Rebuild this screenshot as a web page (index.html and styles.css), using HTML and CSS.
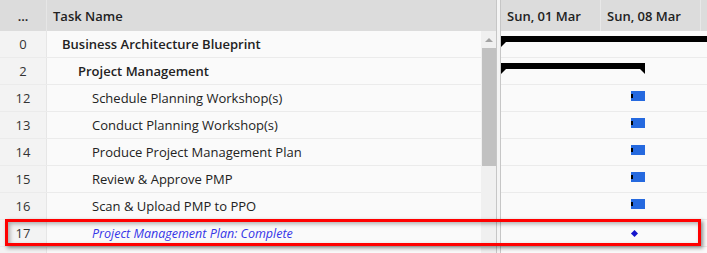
FILE: index.html
```html
<!DOCTYPE html>
<html lang="en">
<head>
    <meta charset="UTF-8">
    <link rel="stylesheet" href="styles.css">
</head>
<body>
    <div class="gantt">
        <div class="grid">
            <div class="grid-head">
                <div class="col-id">...</div>
                <div class="col-name">Task Name</div>
            </div>
            <div class="grid-body">
                <div class="grid-rows">
                    <div class="row summary"><div class="col-id">0</div><div class="col-name lvl0">Business Architecture Blueprint</div></div>
                    <div class="row summary"><div class="col-id">2</div><div class="col-name lvl1">Project Management</div></div>
                    <div class="row"><div class="col-id">12</div><div class="col-name lvl2">Schedule Planning Workshop(s)</div></div>
                    <div class="row"><div class="col-id">13</div><div class="col-name lvl2">Conduct Planning Workshop(s)</div></div>
                    <div class="row"><div class="col-id">14</div><div class="col-name lvl2">Produce Project Management Plan</div></div>
                    <div class="row"><div class="col-id">15</div><div class="col-name lvl2">Review &amp; Approve PMP</div></div>
                    <div class="row"><div class="col-id">16</div><div class="col-name lvl2">Scan &amp; Upload PMP to PPO</div></div>
                    <div class="row milestone"><div class="col-id">17</div><div class="col-name lvl2">Project Management Plan: Complete</div></div>
                    <div class="row"><div class="col-id"></div><div class="col-name"></div></div>
                </div>
                <div class="scrollbar">
                    <div class="scroll-arrow"></div>
                    <div class="scroll-thumb"></div>
                </div>
            </div>
        </div>
        <div class="splitter"></div>
        <div class="chart">
            <div class="chart-head">
                <div class="week">Sun, 01 Mar</div>
                <div class="week">Sun, 08 Mar</div>
                <div class="week"></div>
            </div>
            <div class="chart-rows">
                <div class="row"><div class="bar-summary open" style="left: 0; width: 230px;"></div></div>
                <div class="row"><div class="bar-summary" style="left: 0; width: 144px;"></div></div>
                <div class="row"><div class="bar-task" style="left: 130px; width: 14px;"></div></div>
                <div class="row"><div class="bar-task" style="left: 130px; width: 14px;"></div></div>
                <div class="row"><div class="bar-task" style="left: 130px; width: 14px;"></div></div>
                <div class="row"><div class="bar-task" style="left: 130px; width: 14px;"></div></div>
                <div class="row"><div class="bar-task" style="left: 130px; width: 14px;"></div></div>
                <div class="row"><div class="bar-milestone" style="left: 130px;"></div></div>
                <div class="row"></div>
            </div>
        </div>
        <div class="highlight"></div>
    </div>
</body>
</html>
```

FILE: styles.css
```css
body {
    margin: 0;
    background: #fafafa;
    font-family: "Open Sans", "Noto Sans", sans-serif;
    font-size: 13px;
    color: #222;
    overflow: hidden;
}
.gantt {
    position: relative;
    display: flex;
    height: 253px;
    overflow: hidden;
}
.grid {
    width: 496px;
    flex: none;
}
.grid-head,
.chart-head {
    display: flex;
    height: 31px;
    background: #dcdcdc;
    font-weight: 600;
    align-items: stretch;
}
.grid-head .col-id {
    display: flex;
    align-items: center;
    justify-content: center;
}
.grid-head .col-name {
    display: flex;
    align-items: center;
    padding-left: 6px;
}
.col-id {
    width: 46px;
    flex: none;
    border-right: 1px solid #e6e6e6;
}
.col-name {
    flex: 1;
}
.grid-body {
    display: flex;
}
.grid-rows {
    flex: 1;
}
.row {
    display: flex;
    height: 26px;
    border-bottom: 1px solid #ebebeb;
    align-items: stretch;
}
.grid-rows .col-id {
    background: #f3f3f3;
    display: flex;
    align-items: center;
    justify-content: center;
    color: #333;
}
.grid-rows .col-name {
    display: flex;
    align-items: center;
    white-space: nowrap;
}
.summary .col-name {
    font-weight: 600;
}
.lvl0 { padding-left: 15px; }
.lvl1 { padding-left: 31px; }
.lvl2 { padding-left: 45px; }
.milestone .col-name {
    font-style: italic;
    font-size: 12.5px;
    color: #3535e8;
}
.scrollbar {
    width: 15px;
    background: #f0f0f0;
    display: flex;
    flex-direction: column;
    align-items: center;
}
.scroll-arrow {
    margin-top: 7px;
    width: 0;
    height: 0;
    border-left: 4px solid transparent;
    border-right: 4px solid transparent;
    border-bottom: 4px solid #a3a3a3;
}
.scroll-thumb {
    margin-top: 6px;
    width: 14px;
    height: 118px;
    background: #c1c1c1;
}
.splitter {
    width: 3px;
    flex: none;
    border-left: 1px solid #c6c6c6;
    border-right: 1px solid #c6c6c6;
    background: #f4f4f4;
}
.chart {
    flex: 1;
}
.week {
    width: 100px;
    flex: none;
    border-right: 1px solid #e8e8e8;
    display: flex;
    align-items: center;
    padding-left: 6px;
    box-sizing: border-box;
}
.chart-rows .row {
    position: relative;
}
.bar-summary {
    position: absolute;
    top: 5px;
    height: 6px;
    background: #000;
}
.bar-summary::before,
.bar-summary::after {
    content: "";
    position: absolute;
    top: 6px;
    width: 0;
    height: 0;
    border-top: 5px solid #000;
}
.bar-summary::before {
    left: 0;
    border-right: 5px solid transparent;
}
.bar-summary::after {
    right: 0;
    border-left: 5px solid transparent;
}
.bar-summary.open::after {
    display: none;
}
.bar-task {
    position: absolute;
    top: 6px;
    height: 10px;
    background: #2569df;
}
.bar-task::before {
    content: "";
    position: absolute;
    left: 0;
    top: 3px;
    width: 2px;
    height: 4px;
    background: #000;
}
.bar-milestone {
    position: absolute;
    top: 11px;
    width: 5px;
    height: 5px;
    margin-left: 1px;
    background: #1414cc;
    transform: rotate(45deg);
}
.highlight {
    position: absolute;
    left: 5px;
    top: 219px;
    width: 690px;
    height: 21px;
    border: 3px solid #f00;
    box-shadow: 2px 2px 4px rgba(0, 0, 0, 0.45), inset 2px 2px 4px rgba(0, 0, 0, 0.3);
}
```
